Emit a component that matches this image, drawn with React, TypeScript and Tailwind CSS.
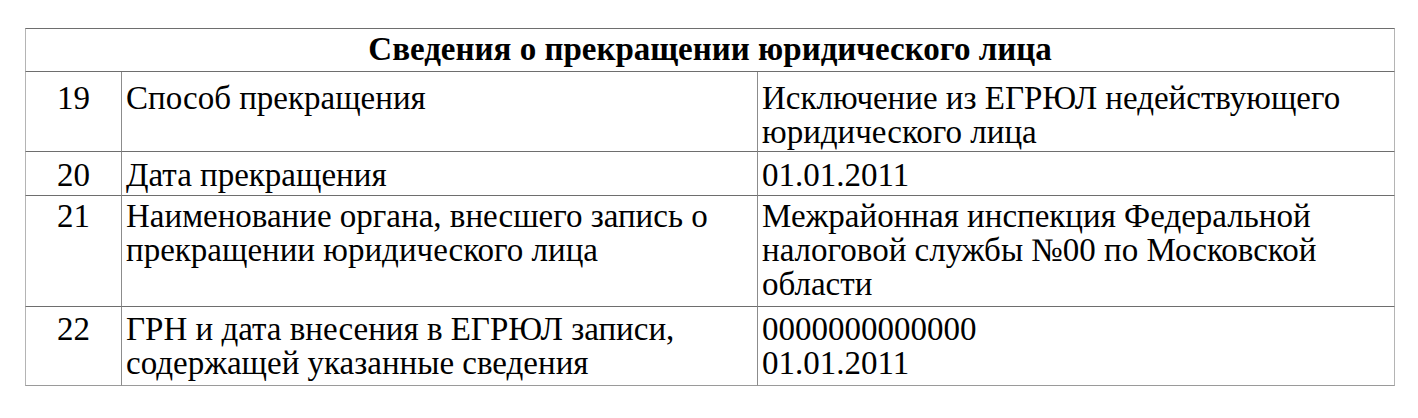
import React from 'react';

type Row = { n: string; label: string[]; value: string[]; h: string; pt: string };

const rows: Row[] = [
  {
    n: '19',
    label: ['Способ прекращения'],
    value: ['Исключение из ЕГРЮЛ недействующего', 'юридического лица'],
    h: 'h-[80px]',
    pt: 'pt-[9px]',
  },
  {
    n: '20',
    label: ['Дата прекращения'],
    value: ['01.01.2011'],
    h: 'h-[44px]',
    pt: 'pt-[6px]',
  },
  {
    n: '21',
    label: ['Наименование органа, внесшего запись о', 'прекращении юридического лица'],
    value: ['Межрайонная инспекция Федеральной', 'налоговой службы №00 по Московской', 'области'],
    h: 'h-[111px]',
    pt: 'pt-[3px]',
  },
  {
    n: '22',
    label: ['ГРН и дата внесения в ЕГРЮЛ записи,', 'содержащей указанные сведения'],
    value: ['0000000000000', '01.01.2011'],
    h: 'h-[79px]',
    pt: 'pt-[5px]',
  },
];

function Lines({ lines }: { lines: string[] }) {
  return (
    <>
      {lines.map((l, i) => (
        <div key={i} className="whitespace-nowrap">
          {l}
        </div>
      ))}
    </>
  );
}

export default function App() {
  return (
    <div className="bg-white w-[1418px] h-[418px] pt-[28px] pl-[25px] text-black">
      <table className="w-[1370px] border-separate border-spacing-0 table-fixed font-['Liberation_Serif',serif] text-[33px] leading-[34px] text-black">
        <colgroup>
          <col className="w-[96px]" />
          <col className="w-[636px]" />
          <col className="w-[638px]" />
        </colgroup>
        <tbody>
          <tr className="h-[44px]">
            <td
              colSpan={3}
              className="border-t border-b border-l border-r border-t-[#6e6e6e] border-b-[#6e6e6e] border-l-[#b4b4b4] border-r-[#b4b4b4] text-center align-top pt-[3px] font-bold"
            >
              Сведения о прекращении юридического лица
            </td>
          </tr>
          {rows.map((r, i) => (
            <tr key={r.n} className={r.h}>
              <td
                className={`border-l border-b border-l-[#b4b4b4] ${i === rows.length - 1 ? 'border-b-[#9a9a9a]' : 'border-b-[#6e6e6e]'} text-center align-top ${r.pt}`}
              >
                {r.n}
              </td>
              <td
                className={`border-l border-b border-l-[#8c8c8c] ${i === rows.length - 1 ? 'border-b-[#9a9a9a]' : 'border-b-[#6e6e6e]'} align-top pl-[4px] ${r.pt}`}
              >
                <Lines lines={r.label} />
              </td>
              <td
                className={`border-l border-b border-r border-l-[#8c8c8c] border-r-[#b4b4b4] ${i === rows.length - 1 ? 'border-b-[#9a9a9a]' : 'border-b-[#6e6e6e]'} align-top pl-[4px] ${r.pt}`}
              >
                <Lines lines={r.value} />
              </td>
            </tr>
          ))}
        </tbody>
      </table>
    </div>
  );
}
